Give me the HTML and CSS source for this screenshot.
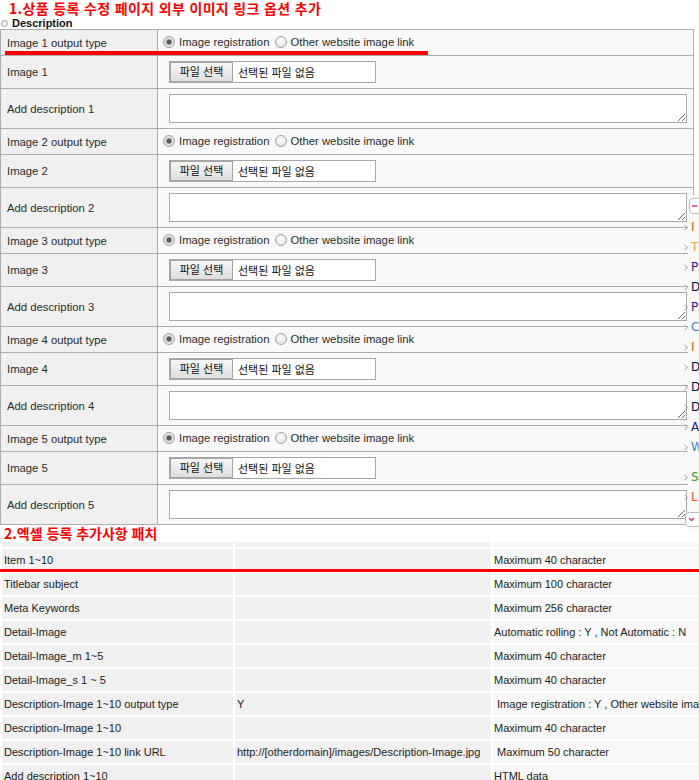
FILE: index.html
```html
<!DOCTYPE html>
<html lang="ko">
  <head>
    <meta charset="UTF-8" />
    <title>상품 등록 패치 노트</title>
    <link rel="stylesheet" href="styles.css">
  </head>
  <body>
    <div class="page">
      <h2 class="note note-1">1.상품 등록 수정 페이지 외부 이미지 링크 옵션 추가</h2>
      <div class="sub"><span class="dot"></span><span class="sub-text">Description</span></div>

      <table class="form">
        <colgroup><col class="c-label"><col></colgroup>
        <tr class="r-type">
          <th>Image 1 output type</th>
          <td>
            <label class="pick"><input type="radio" name="t1" checked>Image registration</label>
            <label class="pick"><input type="radio" name="t1">Other website image link</label>
          </td>
        </tr>
        <tr class="r-file">
          <th>Image 1</th>
          <td><span class="file"><span class="file-btn">파일 선택</span><span class="file-name">선택된 파일 없음</span></span></td>
        </tr>
        <tr class="r-desc">
          <th>Add description 1</th>
          <td><textarea class="desc"></textarea></td>
        </tr>

        <tr class="r-type">
          <th>Image 2 output type</th>
          <td>
            <label class="pick"><input type="radio" name="t2" checked>Image registration</label>
            <label class="pick"><input type="radio" name="t2">Other website image link</label>
          </td>
        </tr>
        <tr class="r-file">
          <th>Image 2</th>
          <td><span class="file"><span class="file-btn">파일 선택</span><span class="file-name">선택된 파일 없음</span></span></td>
        </tr>
        <tr class="r-desc">
          <th>Add description 2</th>
          <td><textarea class="desc"></textarea></td>
        </tr>

        <tr class="r-type">
          <th>Image 3 output type</th>
          <td>
            <label class="pick"><input type="radio" name="t3" checked>Image registration</label>
            <label class="pick"><input type="radio" name="t3">Other website image link</label>
          </td>
        </tr>
        <tr class="r-file">
          <th>Image 3</th>
          <td><span class="file"><span class="file-btn">파일 선택</span><span class="file-name">선택된 파일 없음</span></span></td>
        </tr>
        <tr class="r-desc">
          <th>Add description 3</th>
          <td><textarea class="desc"></textarea></td>
        </tr>

        <tr class="r-type">
          <th>Image 4 output type</th>
          <td>
            <label class="pick"><input type="radio" name="t4" checked>Image registration</label>
            <label class="pick"><input type="radio" name="t4">Other website image link</label>
          </td>
        </tr>
        <tr class="r-file">
          <th>Image 4</th>
          <td><span class="file"><span class="file-btn">파일 선택</span><span class="file-name">선택된 파일 없음</span></span></td>
        </tr>
        <tr class="r-desc">
          <th>Add description 4</th>
          <td><textarea class="desc"></textarea></td>
        </tr>

        <tr class="r-type">
          <th>Image 5 output type</th>
          <td>
            <label class="pick"><input type="radio" name="t5" checked>Image registration</label>
            <label class="pick"><input type="radio" name="t5">Other website image link</label>
          </td>
        </tr>
        <tr class="r-file">
          <th>Image 5</th>
          <td><span class="file"><span class="file-btn">파일 선택</span><span class="file-name">선택된 파일 없음</span></span></td>
        </tr>
        <tr class="r-desc">
          <th>Add description 5</th>
          <td><textarea class="desc"></textarea></td>
        </tr>
      </table>

      <h2 class="note note-2">2.엑셀 등록 추가사항 패치</h2>

      <div class="sheet-wrap">
        <table class="sheet">
          <colgroup><col class="s1"><col class="s2"><col class="s3"></colgroup>
          <tr class="cut"><td></td><td></td><td class="hint"></td></tr>
          <tr><td>Item 1~10</td><td></td><td class="hint">Maximum 40 character</td></tr>
          <tr><td>Titlebar subject</td><td></td><td class="hint">Maximum 100 character</td></tr>
          <tr><td>Meta Keywords</td><td></td><td class="hint">Maximum 256 character</td></tr>
          <tr><td>Detail-Image</td><td></td><td class="hint">Automatic rolling : Y , Not Automatic : N</td></tr>
          <tr><td>Detail-Image_m 1~5</td><td></td><td class="hint">Maximum 40 character</td></tr>
          <tr><td>Detail-Image_s 1 ~ 5</td><td></td><td class="hint">Maximum 40 character</td></tr>
          <tr><td>Description-Image 1~10 output type</td><td>Y</td><td class="hint">&nbsp;Image registration : Y , Other website image link : N</td></tr>
          <tr><td>Description-Image 1~10</td><td></td><td class="hint">Maximum 40 character</td></tr>
          <tr><td>Description-Image 1~10 link URL</td><td>http://[otherdomain]/images/Description-Image.jpg</td><td class="hint">&nbsp;Maximum 50 character</td></tr>
          <tr><td>Add description 1~10</td><td></td><td class="hint">HTML data</td></tr>
        </table>
      </div>

      <!-- red annotation strokes from the patch note -->
      <span class="mark mark-1"></span>
      <span class="mark mark-2"></span>

      <!-- floating quick menu, mostly off screen -->
      <div class="dock">
        <div class="dock-btn dock-top">
          <svg width="6" height="4" viewBox="0 0 6 4"><path d="M0 2 H5" stroke="#e0307a" stroke-width="1.5"/></svg>
        </div>
        <ul class="dock-list">
          <li><svg class="chev" viewBox="0 0 5 7"><path d="M1 1 L4 3.5 L1 6" /></svg><b class="k-org">I</b></li>
          <li><svg class="chev" viewBox="0 0 5 7"><path d="M1 1 L4 3.5 L1 6" /></svg><b class="k-amb">T</b></li>
          <li><svg class="chev" viewBox="0 0 5 7"><path d="M1 1 L4 3.5 L1 6" /></svg><b class="k-nav">P</b></li>
          <li><svg class="chev" viewBox="0 0 5 7"><path d="M1 1 L4 3.5 L1 6" /></svg><b class="k-ink">D</b></li>
          <li><svg class="chev" viewBox="0 0 5 7"><path d="M1 1 L4 3.5 L1 6" /></svg><b class="k-nav">P</b></li>
          <li><svg class="chev" viewBox="0 0 5 7"><path d="M1 1 L4 3.5 L1 6" /></svg><b class="k-sky">C</b></li>
          <li><svg class="chev" viewBox="0 0 5 7"><path d="M1 1 L4 3.5 L1 6" /></svg><b class="k-org">I</b></li>
          <li><svg class="chev" viewBox="0 0 5 7"><path d="M1 1 L4 3.5 L1 6" /></svg><b class="k-ink">D</b></li>
          <li><svg class="chev" viewBox="0 0 5 7"><path d="M1 1 L4 3.5 L1 6" /></svg><b class="k-ink">D</b></li>
          <li><svg class="chev" viewBox="0 0 5 7"><path d="M1 1 L4 3.5 L1 6" /></svg><b class="k-ink">D</b></li>
          <li><svg class="chev" viewBox="0 0 5 7"><path d="M1 1 L4 3.5 L1 6" /></svg><b class="k-nav">A</b></li>
          <li><svg class="chev" viewBox="0 0 5 7"><path d="M1 1 L4 3.5 L1 6" /></svg><b class="k-sky">W</b></li>
          <li class="gap"><svg class="chev" viewBox="0 0 5 7"><path d="M1 1 L4 3.5 L1 6" /></svg><b class="k-grn">S</b></li>
          <li><svg class="chev" viewBox="0 0 5 7"><path d="M1 1 L4 3.5 L1 6" /></svg><b class="k-red">L</b></li>
        </ul>
        <div class="dock-btn dock-bottom">
          <svg width="7" height="5" viewBox="0 0 7 5"><path d="M1 1 L3.5 3.5 L6 1" fill="none" stroke="#e0307a" stroke-width="1.4"/></svg>
        </div>
      </div>
    </div>
  </body>
</html>
```

FILE: styles.css
```css
body {
  margin: 0;
  background: #ffffff;
  font-family: "Liberation Sans", "Noto Sans CJK KR", sans-serif;
  font-size: 11px;
  color: #2b2b2b;
  overflow: hidden;
}

.page {
  position: relative;
  width: 699px;
  height: 780px;
  overflow: hidden;
}

.note {
  margin: 0;
  height: 17px;
  line-height: 17px;
  padding-left: 9px;
  font-family: "Noto Sans CJK KR", sans-serif;
  font-size: 14px;
  font-weight: 700;
  color: #ff0000;
  white-space: nowrap;
}

.note-1 {
  letter-spacing: 0.35px;
}

.note-2 {
  height: 15px;
  line-height: 16px;
  padding-left: 4px;
}

.sub {
  display: flex;
  align-items: center;
  gap: 4px;
  height: 12px;
  padding-left: 1px;
  font-weight: 700;
  font-size: 11px;
  color: #111;
}

.sub-text {
  line-height: 12px;
}

.dot {
  width: 5px;
  height: 5px;
  border: 1px solid #9a9a9a;
  border-radius: 50%;
  background: #f4f4f4;
}

/* upper form table */
.form {
  border-collapse: collapse;
  table-layout: fixed;
  width: 694px;
}

.form col.c-label {
  width: 157px;
}

.form th,
.form td {
  border: 1px solid #adadad;
  vertical-align: middle;
  text-align: left;
  font-weight: normal;
  font-size: 11.3px;
  white-space: nowrap;
}

.form th {
  padding: 0 0 0 6px;
  background: #f0f0f0;
}

.form td {
  padding: 0 0 0 5px;
  background: #f9f9f9;
}

.r-type th { height: 25px; }
.r-file th { height: 32px; }
.r-desc th { height: 39px; }

.pick {
  display: inline-flex;
  align-items: center;
  margin-right: 2px;
}

.pick input {
  appearance: none;
  -webkit-appearance: none;
  width: 12px;
  height: 12px;
  margin: 0 4px 0 0;
  border: 1px solid #a4a4a4;
  border-radius: 50%;
  background: radial-gradient(circle at 50% 40%, #ffffff 0, #e6e6e6 70%, #d4d4d4 100%);
}

.pick input:checked {
  background: radial-gradient(circle, #5a5a5a 0 2px, #9a9a9a 2.6px, #e4e4e4 3.4px, #d6d6d6 100%);
}

.file {
  display: inline-flex;
  align-items: center;
  box-sizing: border-box;
  width: 207px;
  height: 22px;
  margin-left: 6px;
  border: 1px solid #a9a9a9;
  background: #ffffff;
  vertical-align: middle;
}

.file-btn {
  box-sizing: border-box;
  height: 20px;
  width: 63px;
  line-height: 18px;
  text-align: center;
  border: 1px solid #a3a3a3;
  background: linear-gradient(#f6f6f6, #dedede);
  font-size: 11px;
  color: #111;
}

.file-name {
  padding-left: 5px;
  font-size: 11px;
  color: #111;
}

.desc {
  display: block;
  box-sizing: border-box;
  width: 518px;
  height: 29px;
  margin: 0 0 0 6px;
  border: 1px solid #a9a9a9;
  background: #ffffff;
}

/* lower excel column table */
.sheet-wrap {
  width: 699px;
  overflow: hidden;
}

.sheet {
  border-collapse: separate;
  border-spacing: 2px;
  table-layout: fixed;
  width: 794px;
}

.sheet col.s1 { width: 231px; }
.sheet col.s2 { width: 256px; }
.sheet col.s3 { width: 300px; }

.sheet td {
  height: 22px;
  padding: 0 0 0 2px;
  background: #f0f0f0;
  white-space: nowrap;
  overflow: hidden;
  font-size: 11px;
  color: #222;
}

.sheet td.hint {
  padding-left: 1px;
  background: #f8f8f8;
}

.sheet tr.cut td {
  height: 5px;
}

.mark {
  position: absolute;
  background: #ff0000;
}

.mark-1 {
  left: 5px;
  top: 51px;
  width: 423px;
  height: 4px;
}

.mark-2 {
  left: 0;
  top: 569px;
  width: 699px;
  height: 3px;
}

/* quick menu */
.dock {
  position: absolute;
  left: 683px;
  top: 195px;
  width: 20px;
  height: 337px;
  background: linear-gradient(to right, transparent 5px, #f9f9f9 5px);
}

.dock-btn {
  box-sizing: border-box;
  display: flex;
  align-items: center;
  width: 20px;
  height: 16px;
  padding-left: 2px;
  border: 1px solid #bdbdbd;
  border-radius: 4px;
  background: #ffffff;
}

.dock-top {
  margin: 3px 0 0 6px;
}

.dock-bottom {
  margin: 5px 0 0 2px;
  height: 15px;
}

.dock-list {
  list-style: none;
  margin: 3px 0 0;
  padding: 0;
}

.dock-list li {
  display: flex;
  align-items: center;
  gap: 2px;
  height: 20px;
}

.dock-list li.gap {
  margin-top: 10px;
}

.chev {
  width: 6px;
  height: 7px;
  fill: none;
  stroke: #9a9a9a;
  stroke-width: 1;
}

.dock-list b {
  font-family: "DejaVu Sans", sans-serif;
  font-size: 12px;
  font-weight: normal;
}

.k-org { color: #b8651a; }
.k-amb { color: #f0a030; }
.k-nav { color: #23238c; }
.k-ink { color: #101040; }
.k-sky { color: #3a7ed0; }
.k-grn { color: #3a9a2a; }
.k-red { color: #f05a3a; }
```
